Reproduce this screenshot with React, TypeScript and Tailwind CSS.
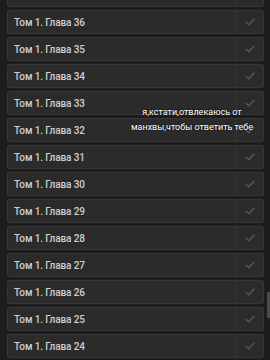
import React from "react";

const chapters = [36, 35, 34, 33, 32, 31, 30, 29, 28, 27, 26, 25, 24];

function Check() {
  return (
    <svg width="10" height="8" viewBox="0 0 10 8" fill="none">
      <path d="M1 4.3 L3.7 6.8 L9 1.2" stroke="#575757" strokeWidth="1.5" strokeLinecap="round" strokeLinejoin="round" />
    </svg>
  );
}

function Row({ label }: { label?: string }) {
  return (
    <div className="flex h-[24px] shrink-0 rounded-[2px] border border-[#363636] bg-[#2b2b2b]">
      <div className="flex flex-1 items-center pl-[6px] text-[10px] font-medium tracking-[-0.1px] text-[#cfcfcf]">
        {label}
      </div>
      <div className="flex w-[27px] items-center justify-center border-l border-[#363636]">
        {label ? <Check /> : null}
      </div>
    </div>
  );
}

export default function App() {
  return (
    <div className="relative w-[270px] h-[360px] overflow-hidden bg-[#1d1d1d]" style={{ fontFamily: "Roboto, 'Liberation Sans', sans-serif" }}>
      <div className="flex flex-col gap-[3px] mt-[-17px] ml-[7px] w-[257px]">
        <Row />
        {chapters.map((n) => (
          <Row key={n} label={`Том 1. Глава ${n}`} />
        ))}
      </div>
      <div className="absolute right-0 top-[292px] h-[26px] w-[3px] bg-[#4a4a4a]" />
      <div className="absolute left-[112px] top-[105px] w-[160px] text-center text-[9px] leading-[15px] text-white [text-shadow:0_0_2px_rgba(0,0,0,0.9)]">
        я,кстати,отвлекаюсь от
        <br />
        манхвы,чтобы ответить тебе
      </div>
    </div>
  );
}
